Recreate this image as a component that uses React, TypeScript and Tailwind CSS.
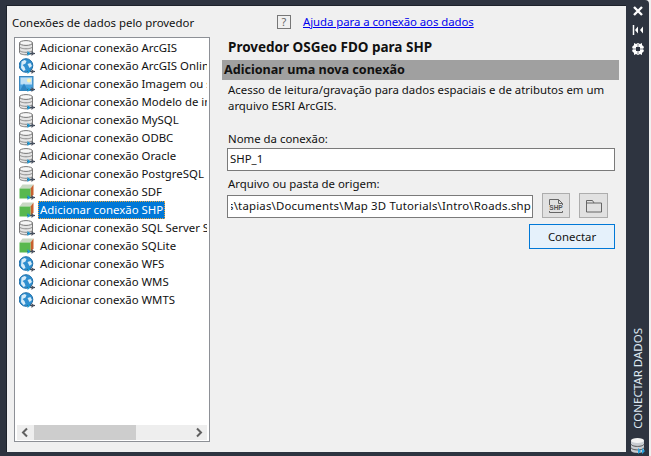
import React from "react";

const Arrow = () => (
  <g>
    <path d="M8 13.500h8" stroke="#3d4450" strokeWidth="1.2" />
    <path d="M8.500 11l3 2.500-3 2.500z" fill="#1b9ad6" />
    <path d="M12.500 11l3 2.500-3 2.500z" fill="#4a5260" />
  </g>
);

const Db = () => (
  <svg width="17" height="17" viewBox="0 0 17 17" className="shrink-0">
    <path d="M0.500 3v9.500c0 1.300 2.900 2.300 6.500 2.300s6.500-1 6.500-2.300V3z" fill="#e4e4e4" stroke="#777" />
    <ellipse cx="7" cy="3" rx="6.500" ry="2.400" fill="#f6f6f6" stroke="#777" />
    <path d="M0.500 6.500c0 1.300 2.900 2.300 6.500 2.300s6.500-1 6.500-2.300M0.500 10c0 1.300 2.900 2.300 6.500 2.300s6.500-1 6.500-2.300" fill="none" stroke="#888" />
    <Arrow />
  </svg>
);

const Globe = () => (
  <svg width="17" height="17" viewBox="0 0 17 17" className="shrink-0">
    <circle cx="7" cy="7.500" r="6.800" fill="#2f8fd0" stroke="#1f6ea8" />
    <path d="M2.500 3.500l3-1.500 2 1-1 2.500-3 1.500 2 2 1 3-2 1-2.500-3zM8.500 6l3-1 1.500 3-2.500 2z" fill="#d8ecf8" />
    <Arrow />
  </svg>
);

const Img = () => (
  <svg width="17" height="17" viewBox="0 0 17 17" className="shrink-0">
    <rect x="0.500" y="0.500" width="13.500" height="14" fill="#4aa3df" stroke="#3b87bd" />
    <rect x="1.500" y="1.500" width="11.500" height="7" fill="#bfe0f5" />
    <circle cx="10" cy="4.500" r="2" fill="#fdf3b0" />
    <path d="M1 14.500l4-7 4 7z" fill="#2f86c3" />
    <Arrow />
  </svg>
);

const Cube = () => (
  <svg width="17" height="17" viewBox="0 0 17 17" className="shrink-0">
    <path d="M0.500 4.500L3.500 0.500h11l-3 4z" fill="#c9d8c4" />
    <path d="M11.500 4.500L14.500 0.500v10l-3 4z" fill="#c8602f" />
    <rect x="0.500" y="4.500" width="11" height="10" fill="#58b84f" />
    <Arrow />
  </svg>
);

const rows: [string, React.FC][] = [
  ["Adicionar conexão ArcGIS", Db],
  ["Adicionar conexão ArcGIS Online", Globe],
  ["Adicionar conexão Imagem ou superfície", Img],
  ["Adicionar conexão Modelo de informação", Db],
  ["Adicionar conexão MySQL", Db],
  ["Adicionar conexão ODBC", Db],
  ["Adicionar conexão Oracle", Db],
  ["Adicionar conexão PostgreSQL", Db],
  ["Adicionar conexão SDF", Cube],
  ["Adicionar conexão SHP", Cube],
  ["Adicionar conexão SQL Server Spatial", Db],
  ["Adicionar conexão SQLite", Cube],
  ["Adicionar conexão WFS", Globe],
  ["Adicionar conexão WMS", Globe],
  ["Adicionar conexão WMTS", Globe],
];

export default function App() {
  return (
    <div
      className="w-[651px] h-[456px] bg-[#f0f0f0] overflow-hidden text-[11.4px] leading-[16px] text-[#111]"
      style={{ fontFamily: '"Noto Sans", sans-serif' }}
    >
      <div className="w-[649px] h-[456px] bg-[#2e3440] rounded-tr-[4px] flex">
        <div className="ml-[6px] mt-[5px] mb-[4px] w-[620px] bg-[#f0f0f0] flex border-t border-l border-[#1d222b]">
          {/* left */}
          <div className="w-[215px] shrink-0 pl-[7px] flex flex-col">
            <div className="h-[31px] pt-[9px] -ml-[2px] whitespace-nowrap">Conexões de dados pelo provedor</div>
            <div className="w-[196px] h-[405px] border border-[#8d9096] bg-white flex flex-col p-[1px]">
              <div className="flex-1 overflow-hidden pl-[3px]">
                {rows.map(([t, I], i) => (
                  <div key={t} className="h-[18px] flex items-center whitespace-nowrap w-[188px] overflow-hidden">
                    <I />
                    {i === 9 ? (
                      <span className="ml-[2px] h-[18px] leading-[18px] px-[2px] bg-[#0078d7] text-white outline-1 outline-dotted -outline-offset-1 outline-[#e8a33d]">{t}</span>
                    ) : (
                      <span className="ml-[4px]">{t}</span>
                    )}
                  </div>
                ))}
              </div>
              <div className="h-[15px] mx-[1px] bg-[#eeeeee] flex items-center shrink-0">
                <svg width="17" height="15" viewBox="0 0 17 15" className="shrink-0">
                  <path d="M10 3.500L6 7.500l4 4" fill="none" stroke="#606060" strokeWidth="2" />
                </svg>
                <div className="w-[102px] h-[15px] bg-[#cdcdcd]" />
                <div className="flex-1" />
                <svg width="17" height="15" viewBox="0 0 17 15" className="shrink-0">
                  <path d="M7 3.500l4 4-4 4" fill="none" stroke="#606060" strokeWidth="2" />
                </svg>
              </div>
            </div>
          </div>
          {/* right */}
          <div className="flex-1 flex flex-col pt-[9px]">
            <div className="h-[14px] flex items-center pl-[55px]">
              <div className="w-[14px] h-[14px] border border-[#777] flex items-center justify-center text-[11px] text-[#666] bg-[#f0f0f0]">?</div>
              <a className="ml-[12px] text-[#0000ee] underline whitespace-nowrap tracking-[-0.06px]">Ajuda para a conexão aos dados</a>
            </div>
            <div className="mt-[9px] pl-[6px] h-[18px] text-[13.500px] font-bold whitespace-nowrap leading-[18px]">Provedor OSGeo FDO para SHP</div>
            <div className="mt-[4px] w-[397px] h-[20px] bg-[#a0a0a0] text-[12.600px] font-bold pl-[2px] leading-[20px] whitespace-nowrap">Adicionar uma nova conexão</div>
            <div className="mt-[2px] pl-[6px] w-[397px]">Acesso de leitura/gravação para dados espaciais e de atributos em um arquivo ESRI ArcGIS.</div>
            <div className="mt-[17px] pl-[6px] whitespace-nowrap">Nome da conexão:</div>
            <div className="mt-[1px] ml-[5px] w-[388px] h-[23px] bg-white border border-[#7a7a7a] px-[2px] leading-[20px]">SHP_1</div>
            <div className="mt-[5px] pl-[6px] whitespace-nowrap">Arquivo ou pasta de origem:</div>
            <div className="mt-[1px] ml-[5px] flex items-end w-[388px]">
              <div className="w-[306px] h-[23px] bg-white border border-[#7a7a7a] pl-[3px] pr-[1px]">
                <div className="flex justify-end overflow-hidden whitespace-nowrap leading-[20px] tracking-[0.2px]">
                  <span className="shrink-0">Users\tapias\Documents\Map 3D Tutorials\Intro\Roads.shp</span>
                </div>
              </div>
              <div className="ml-[9px] w-[28px] h-[25px] bg-[#e1e1e1] border border-[#adadad] flex items-center justify-center">
                <svg width="18" height="18" viewBox="0 0 18 18">
                  <path d="M2.500 8V2.500h9l4 4V8M2.500 14v1.500h13V14M11.500 2.500v4h4" fill="none" stroke="#666" />
                  <text x="9" y="13" textAnchor="middle" fontSize="6.500" fontWeight="700" fill="#555" fontFamily="Liberation Sans">SHP</text>
                </svg>
              </div>
              <div className="ml-[9px] w-[29px] h-[25px] bg-[#e1e1e1] border border-[#adadad] flex items-center justify-center">
                <svg width="18" height="16" viewBox="0 0 18 16">
                  <path d="M1.500 14V2.500h6l1.500 2.500h7.500V14zM1.500 5H9" fill="none" stroke="#666" />
                </svg>
              </div>
            </div>
            <div className="mt-[6px] ml-[307px] w-[86px] h-[25px] border border-[#0078d7] bg-[#e5f1fb] flex items-center justify-center">Conectar</div>
          </div>
        </div>
        {/* title bar */}
        <div className="flex-1 relative flex flex-col items-center text-white">
          <svg width="12" height="12" viewBox="0 0 12 12" className="mt-[5px]">
            <path d="M2 2l8 8M10 2l-8 8" stroke="#fff" strokeWidth="2.400" />
          </svg>
          <svg width="12" height="12" viewBox="0 0 12 12" className="mt-[7px]">
            <path d="M1.500 1v10" stroke="#fff" strokeWidth="1.500" />
            <path d="M3 6l3-3.500v7z M11 2.500L8 6l3 3.500z" fill="#fff" />
          </svg>
          <svg width="12" height="12" viewBox="0 0 12 12" className="mt-[7px]">
            <path d="M2 0l2 1 2-1 2 1 2-1 0 2 2 2-1 2 1 2-2 2 0 2-2-1-2 1-2-1-2 1 0-2-2-2 1-2-1-2 2-2z" fill="#fff" />
            <rect x="4" y="4" width="4" height="4" fill="#2e3440" />
            <path d="M6 1v10M1 6h10" stroke="#2e3440" strokeWidth="0.600" />
          </svg>
          <div className="flex-1" />
          <div className="[writing-mode:vertical-rl] rotate-180 text-[11.500px] leading-[14px] whitespace-nowrap text-[#dfe9f3] mb-[8px]">CONECTAR DADOS</div>
          <svg width="18" height="18" viewBox="0 0 18 18" className="mb-[1px]">
            <path d="M2 3.500v10c0 1.300 2.800 2.400 6.500 2.400s6.500-1 6.500-2.400v-10z" fill="#c9cdd2" />
            <ellipse cx="8.500" cy="3.500" rx="6.500" ry="2.400" fill="#f2f2f2" />
            <path d="M2 7c0 1.300 2.800 2.400 6.500 2.400S15 8.300 15 7M2 10.500c0 1.300 2.800 2.400 6.500 2.400s6.500-1 6.500-2.400" fill="none" stroke="#555" />
            <path d="M9 11l3 3-3 3zM13 11l3 3-3 3z" fill="#29a3e0" />
          </svg>
        </div>
      </div>
    </div>
  );
}
